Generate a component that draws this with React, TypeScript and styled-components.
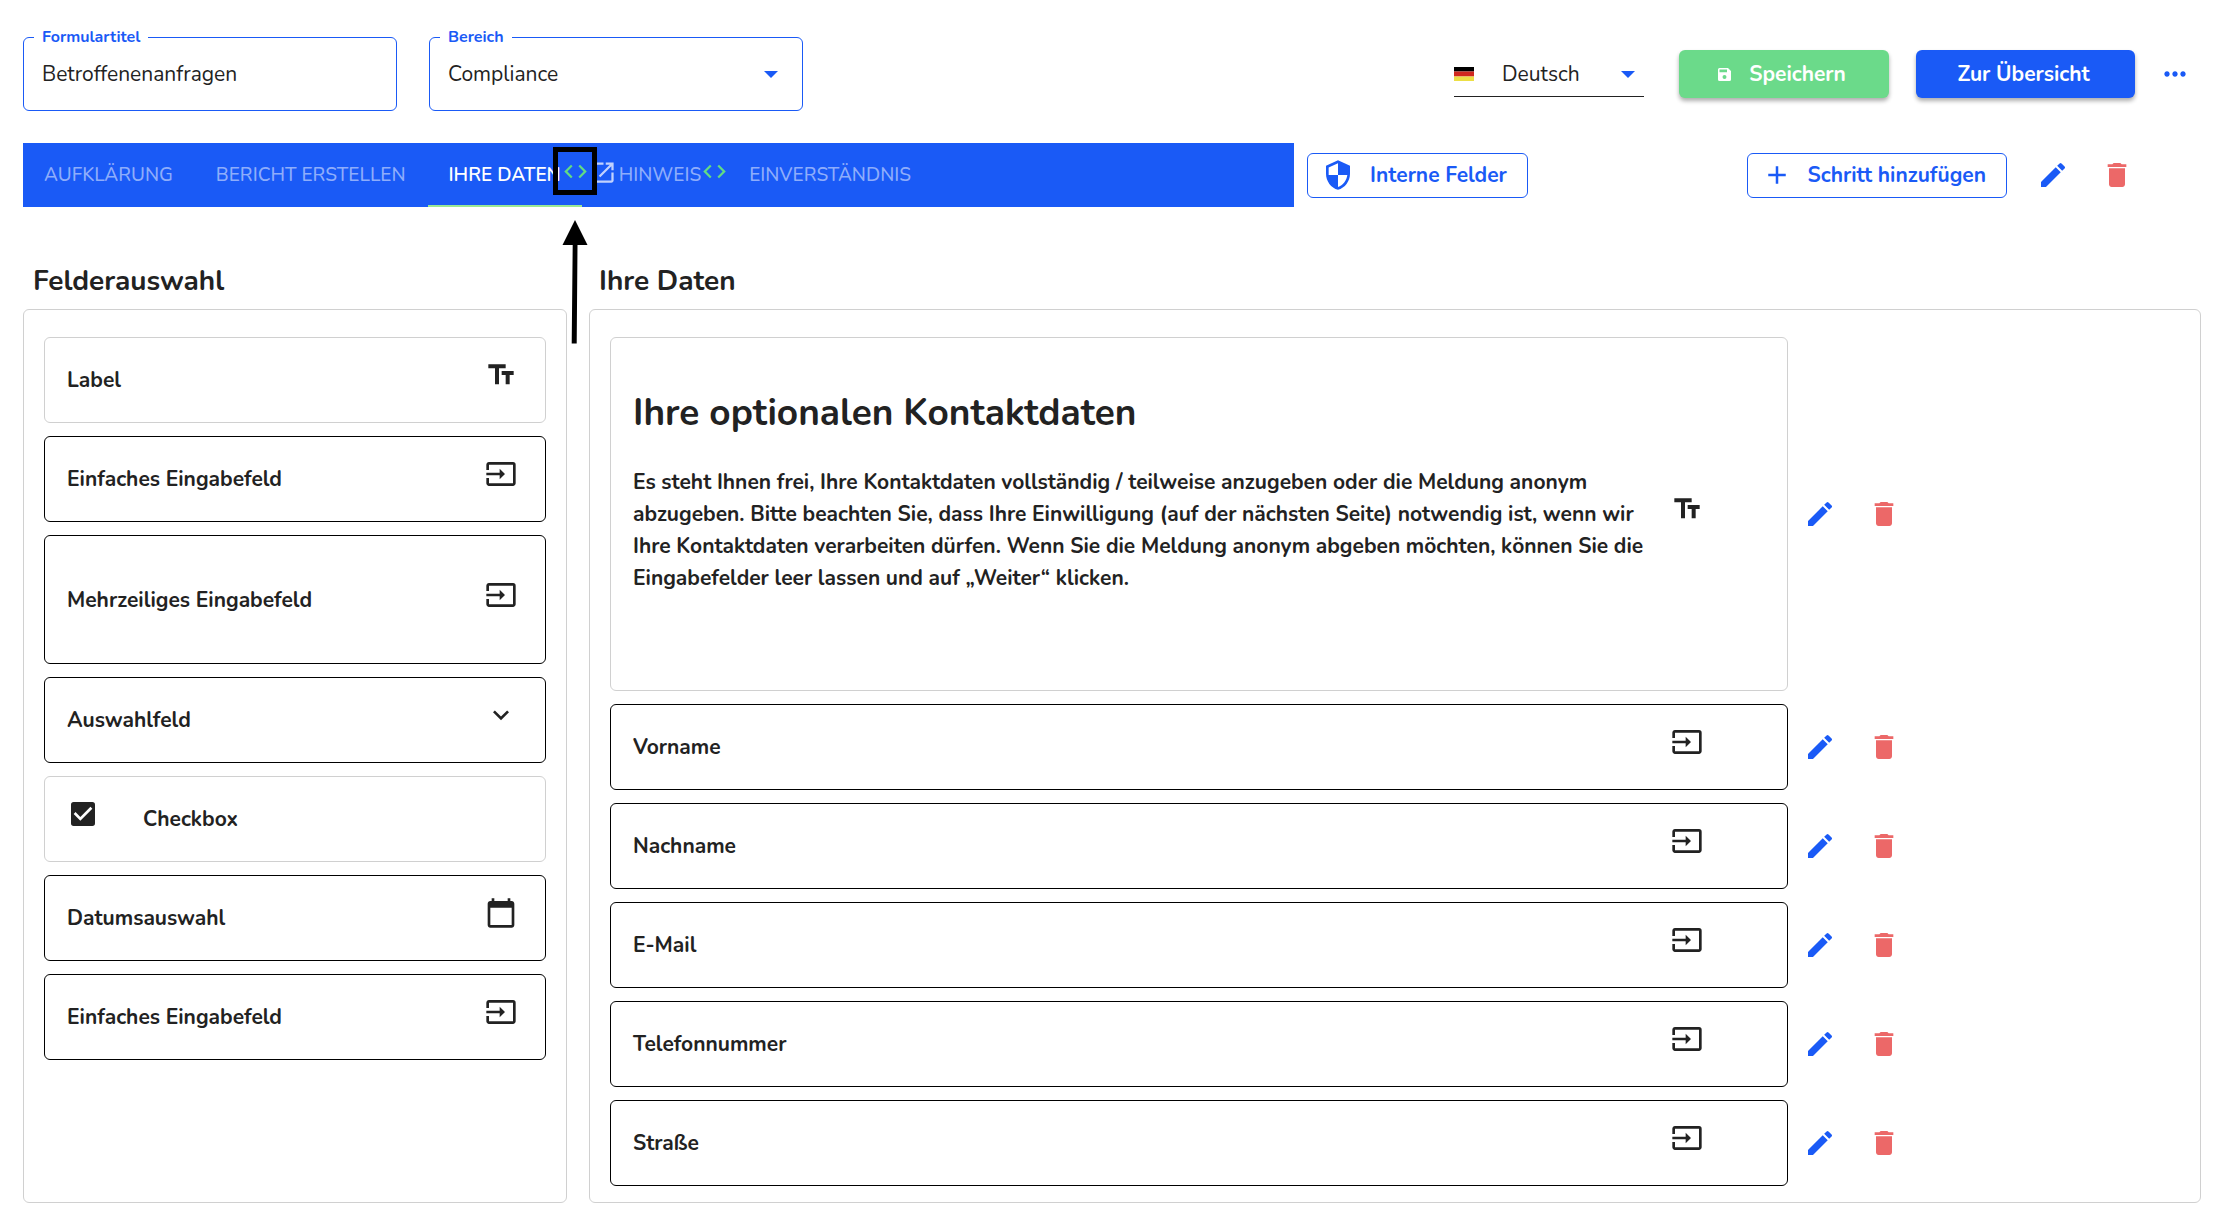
import React, { useState } from 'react';
import styled, { createGlobalStyle, css } from 'styled-components';
import {
  MdAdd,
  MdCalendarToday,
  MdCheckBox,
  MdCode,
  MdDelete,
  MdEdit,
  MdExpandMore,
  MdInput,
  MdMoreHoriz,
  MdOpenInNew,
  MdSecurity,
  MdTextFields,
} from 'react-icons/md';

const blue = '#1a5af6';
const green = '#6bda8a';
const red = '#ec6868';
const ink = '#222222';
const line = '#d0d0d0';

const GlobalStyle = createGlobalStyle`
  *, *::before, *::after { box-sizing: border-box; }
  body {
    margin: 0;
    background: #ffffff;
    color: ${ink};
    font-family: Nunito, "Open Sans", "Noto Sans", sans-serif;
    font-size: 21px;
  }
  button, input, select { font: inherit; color: inherit; }
  button { cursor: pointer; }
`;

const Page = styled.main`
  padding: 37px 35px 27px 23px;
`;

const Header = styled.header`
  display: flex;
  align-items: center;
  margin-bottom: 32px;
`;

const Field = styled.div`
  position: relative;
  display: flex;
  width: 17%;
  max-width: 374px;
  height: 74px;
  margin-right: 32px;
  flex: 1 1 auto;
`;

const FieldLabel = styled.label`
  position: absolute;
  top: -10px;
  left: 11px;
  padding: 0 8px;
  background: #ffffff;
  color: ${blue};
  font-size: 16px;
  font-weight: 700;
  line-height: 20px;
`;

const fieldBox = css`
  width: 100%;
  height: 100%;
  padding: 0 18px;
  border: 1px solid ${blue};
  border-radius: 6px;
  background: transparent;
  appearance: none;
  outline: none;
`;

const FieldInput = styled.input`
  ${fieldBox}
`;

const FieldSelect = styled.select`
  ${fieldBox}
`;

const Caret = styled.svg<{ $right: number }>`
  position: absolute;
  right: ${(p) => p.$right}px;
  top: 50%;
  width: 14px;
  height: 7px;
  margin-top: -3px;
  fill: ${blue};
  pointer-events: none;
`;

const HeaderActions = styled.div`
  display: flex;
  align-items: center;
  margin-left: auto;
`;

const Language = styled.div`
  position: relative;
  display: flex;
  align-items: center;
  width: 190px;
  height: 45px;
  margin-right: 35px;
  border-bottom: 1px solid ${ink};
`;

const Flag = styled.svg`
  position: absolute;
  left: 0;
  width: 20px;
  height: 14px;
  pointer-events: none;
`;

const LanguageSelect = styled.select`
  width: 100%;
  height: 100%;
  padding: 0 0 0 48px;
  border: 0;
  background: transparent;
  appearance: none;
  outline: none;
`;

const SolidButton = styled.button<{ $color: string; $width: number }>`
  display: flex;
  align-items: center;
  justify-content: center;
  gap: 18px;
  width: ${(p) => p.$width}px;
  height: 48px;
  padding: 0 8px 0 4px;
  margin-right: ${(p) => (p.$color === green ? 27 : 14)}px;
  border: 0;
  border-radius: 6px;
  background: ${(p) => p.$color};
  color: #ffffff;
  font-weight: 700;
  white-space: nowrap;
  box-shadow: 0 3px 4px rgba(0, 0, 0, 0.32);
`;

const OutlineButton = styled.button`
  display: flex;
  align-items: center;
  gap: 16px;
  height: 45px;
  padding: 0 20px 0 14px;
  border: 1px solid ${blue};
  border-radius: 6px;
  background: #ffffff;
  color: ${blue};
  font-weight: 700;
  white-space: nowrap;
`;

const IconButton = styled.button<{ $color: string; $narrow?: boolean }>`
  display: flex;
  align-items: center;
  justify-content: center;
  width: ${(p) => (p.$narrow ? 52 : 64)}px;
  height: 64px;
  padding: 0;
  border: 0;
  background: transparent;
  color: ${(p) => p.$color};
`;

const StepBar = styled.div`
  display: flex;
  align-items: center;
`;

const Tabs = styled.div`
  display: flex;
  gap: 1px;
  width: 58.36%;
  height: 64px;
  margin-right: 13px;
  background: ${blue};
`;

const Tab = styled.button<{ $active?: boolean; $linked?: boolean }>`
  position: relative;
  display: flex;
  align-items: center;
  gap: 2px;
  padding: ${(p) => (p.$linked ? '0 26px 0 7px' : '0 21px')};
  border: 0;
  background: transparent;
  color: ${(p) => (p.$active ? '#ffffff' : '#8eadfb')};
  font-size: 19px;
  font-weight: ${(p) => (p.$active ? 600 : 500)};
  white-space: nowrap;

  &::after {
    content: '';
    position: absolute;
    left: 0;
    right: 0;
    bottom: 0;
    height: 2px;
    background: ${(p) => (p.$active ? '#9be895' : 'transparent')};
  }
`;

const LinkIcon = styled(MdOpenInNew)`
  margin-bottom: 6px;
  color: #c2d2fd;
`;

const CodeBadge = styled(MdCode)<{ $right: number }>`
  position: absolute;
  top: 15px;
  right: ${(p) => p.$right}px;
  color: #62dc84;
`;

const Marker = styled.span`
  position: absolute;
  z-index: 1;
  top: 4px;
  right: -15px;
  width: 44px;
  height: 48px;
  border: 5px solid #000000;
`;

const Pointer = styled.svg`
  position: absolute;
  z-index: 1;
  top: 77px;
  right: -6px;
  width: 26px;
  height: 124px;
`;

const StepActions = styled.div`
  display: flex;
  align-items: center;
  margin: 0 52px 0 auto;

  ${OutlineButton} {
    margin-right: 14px;
  }
`;

const Columns = styled.div`
  display: grid;
  grid-template-columns: minmax(0, 544fr) minmax(0, 1612fr);
  column-gap: 22px;
  padding-top: 56px;
`;

const Column = styled.section`
  display: flex;
  flex-direction: column;
`;

const ColumnTitle = styled.h2`
  margin: 0;
  padding: 0 10px 10px;
  font-size: 28px;
  font-weight: 700;
  line-height: 36px;
`;

const Panel = styled.ul`
  display: flex;
  flex: 1;
  flex-direction: column;
  gap: 13px;
  margin: 0;
  padding: 27px 20px 16px;
  border: 1px solid ${line};
  border-radius: 6px;
  list-style: none;
`;

const Row = styled.li`
  display: flex;
  align-items: center;
`;

const Card = styled.div<{ $soft?: boolean; $height?: number; $part?: boolean }>`
  display: flex;
  align-items: center;
  justify-content: space-between;
  width: ${(p) => (p.$part ? '75%' : '100%')};
  min-height: ${(p) => p.$height ?? 86}px;
  padding: 0 ${(p) => (p.$part ? 84 : 28)}px 0 22px;
  border: 1px solid ${(p) => (p.$soft ? line : '#000000')};
  border-radius: 6px;
  font-weight: 700;

  > svg {
    flex: none;
    margin-bottom: 10px;
  }
`;

const Tick = styled.span`
  position: relative;
  display: flex;
  width: 32px;
  height: 32px;
  margin: 0 44px 10px 0;

  input {
    position: absolute;
    inset: 0;
    margin: 0;
    opacity: 0;
  }
`;

const TickLabel = styled.label`
  flex: 1;
`;

const Copy = styled.div`
  max-width: 1036px;
  padding-bottom: 46px;

  h1 {
    margin: 0 0 28px;
    font-size: 37px;
    font-weight: 700;
    line-height: 50px;
  }

  p {
    margin: 0;
    line-height: 32px;
  }
`;

const DownCaret = ({ right }: { right: number }) => (
  <Caret $right={right} viewBox="0 0 14 7" aria-hidden="true">
    <path d="M0 0h14L7 7z" />
  </Caret>
);

const palette = [
  { label: 'Label', icon: MdTextFields, soft: true },
  { label: 'Einfaches Eingabefeld', icon: MdInput },
  { label: 'Mehrzeiliges Eingabefeld', icon: MdInput, height: 129 },
  { label: 'Auswahlfeld', icon: MdExpandMore },
  { label: 'Checkbox', soft: true, tick: true },
  { label: 'Datumsauswahl', icon: MdCalendarToday },
  { label: 'Einfaches Eingabefeld', icon: MdInput },
];

const formFields = ['Vorname', 'Nachname', 'E-Mail', 'Telefonnummer', 'Straße'];

const RowActions = ({ name }: { name: string }) => (
  <>
    <IconButton type="button" $color={blue} aria-label={`${name} bearbeiten`}>
      <MdEdit size={32} />
    </IconButton>
    <IconButton type="button" $color={red} aria-label={`${name} löschen`}>
      <MdDelete size={32} />
    </IconButton>
  </>
);

export default function App() {
  const [title, setTitle] = useState('Betroffenenanfragen');
  const [ticked, setTicked] = useState(true);

  return (
    <>
      <GlobalStyle />
      <Page>
        <Header>
          <Field>
            <FieldInput id="title" value={title} onChange={(e) => setTitle(e.target.value)} />
            <FieldLabel htmlFor="title">Formulartitel</FieldLabel>
          </Field>
          <Field>
            <FieldSelect id="area" defaultValue="Compliance">
              <option>Compliance</option>
            </FieldSelect>
            <FieldLabel htmlFor="area">Bereich</FieldLabel>
            <DownCaret right={25} />
          </Field>
          <HeaderActions>
            <Language>
              <Flag viewBox="0 0 20 14" aria-hidden="true">
                <path fill="#000000" d="M0 0h20v4.500H0z" />
                <path fill="#d0281f" d="M0 4.500h20v5H0z" />
                <path fill="#ecdf45" d="M0 9.500h20V14H0z" />
              </Flag>
              <LanguageSelect aria-label="Sprache" defaultValue="Deutsch">
                <option>Deutsch</option>
              </LanguageSelect>
              <DownCaret right={9} />
            </Language>
            <SolidButton type="button" $color={green} $width={210}>
              <svg width="13" height="13" viewBox="0 0 13 13" aria-hidden="true">
                <path
                  fill="#ffffff"
                  fillRule="evenodd"
                  d="M1.500 0h8.500L13 3v8.500a1.500 1.500 0 0 1-1.500 1.500h-10A1.500 1.500 0 0 1 0 11.500v-10A1.500 1.500 0 0 1 1.500 0zm0 1.500v2.800h7.500V1.500zM6.500 7a2 2 0 1 0 0 4 2 2 0 0 0 0-4z"
                />
              </svg>
              Speichern
            </SolidButton>
            <SolidButton type="button" $color={blue} $width={219}>
              Zur Übersicht
            </SolidButton>
            <IconButton type="button" $color={blue} $narrow aria-label="Mehr">
              <MdMoreHoriz size={32} />
            </IconButton>
          </HeaderActions>
        </Header>

        <StepBar>
          <Tabs role="tablist">
            <Tab role="tab" type="button">AUFKLÄRUNG</Tab>
            <Tab role="tab" type="button">BERICHT ERSTELLEN</Tab>
            <Tab role="tab" type="button" aria-selected="true" $active>
              IHRE DATEN
              <CodeBadge size={27} $right={-7} />
              <Marker />
              <Pointer viewBox="0 0 26 124" aria-hidden="true">
                <path d="M13 0l12.500 25H15.500L14.700 123.500h-5L10.700 25H.5z" />
              </Pointer>
            </Tab>
            <Tab role="tab" type="button" $linked>
              <LinkIcon size={27} />
              HINWEIS
              <CodeBadge size={27} $right={-1} />
            </Tab>
            <Tab role="tab" type="button">EINVERSTÄNDNIS</Tab>
          </Tabs>
          <OutlineButton type="button">
            <MdSecurity size={32} />
            Interne Felder
          </OutlineButton>
          <StepActions>
            <OutlineButton type="button">
              <MdAdd size={30} />
              Schritt hinzufügen
            </OutlineButton>
            <RowActions name="Schritt" />
          </StepActions>
        </StepBar>

        <Columns>
          <Column>
            <ColumnTitle>Felderauswahl</ColumnTitle>
            <Panel>
              {palette.map(({ label, icon: Icon, soft, tick, height }, i) => (
                <Row key={i}>
                  <Card $soft={soft} $height={height}>
                    {tick && (
                      <Tick>
                        <input
                          id="sample-tick"
                          type="checkbox"
                          checked={ticked}
                          onChange={() => setTicked(!ticked)}
                        />
                        <MdCheckBox size={32} />
                      </Tick>
                    )}
                    {tick ? <TickLabel htmlFor="sample-tick">{label}</TickLabel> : label}
                    {Icon && <Icon size={32} />}
                  </Card>
                </Row>
              ))}
            </Panel>
          </Column>

          <Column>
            <ColumnTitle>Ihre Daten</ColumnTitle>
            <Panel>
              <Row>
                <Card $soft $part $height={354}>
                  <Copy>
                    <h1>Ihre optionalen Kontaktdaten</h1>
                    <p>
                      Es steht Ihnen frei, Ihre Kontaktdaten vollständig / teilweise anzugeben oder die
                      Meldung anonym abzugeben. Bitte beachten Sie, dass Ihre Einwilligung (auf der
                      nächsten Seite) notwendig ist, wenn wir Ihre Kontaktdaten verarbeiten dürfen. Wenn
                      Sie die Meldung anonym abgeben möchten, können Sie die Eingabefelder leer lassen
                      und auf „Weiter“ klicken.
                    </p>
                  </Copy>
                  <MdTextFields size={32} />
                </Card>
                <RowActions name="Text" />
              </Row>
              {formFields.map((name) => (
                <Row key={name}>
                  <Card $part>
                    {name}
                    <MdInput size={32} />
                  </Card>
                  <RowActions name={name} />
                </Row>
              ))}
            </Panel>
          </Column>
        </Columns>
      </Page>
    </>
  );
}
